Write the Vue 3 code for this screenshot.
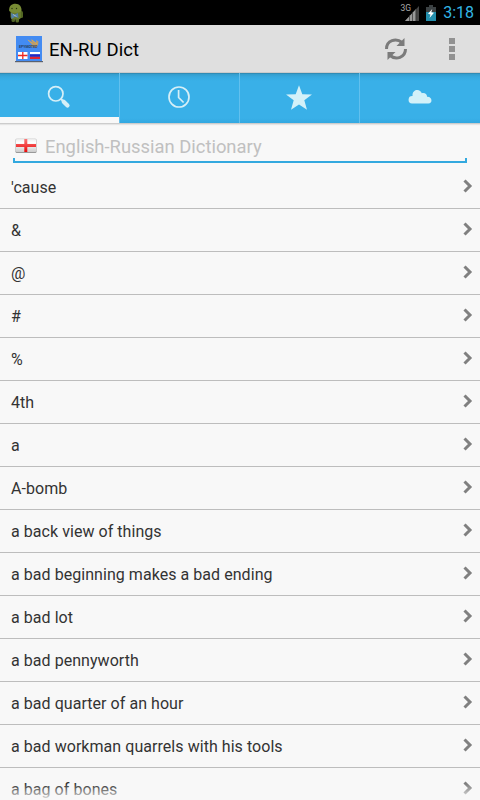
<script setup>
const words = ["'cause", '&', '@', '#', '%', '4th', 'a', 'A-bomb', 'a back view of things', 'a bad beginning makes a bad ending', 'a bad lot', 'a bad pennyworth', 'a bad quarter of an hour', 'a bad workman quarrels with his tools', 'a bag of bones']
</script>

<template>
  <div class="screen">
    <header class="status">
      <svg class="droid" width="16" height="20" viewBox="0 0 16 20">
        <rect x="11" y="8" width="4" height="7" rx="1.500" fill="#526622" />
        <rect x="3.500" y="13" width="3.500" height="6" rx="1.500" fill="#4f6125" />
        <rect x="7.500" y="13" width="3.500" height="6.500" rx="1.500" fill="#596c2a" />
        <rect x="2.500" y="7" width="10.500" height="9.500" rx="3" fill="#66792d" />
        <path d="M1.200 8C.8 3 3.500.8 7.500.8S14 4 13.500 8c-2 2.500-10 2.500-12.300 0z" fill="#788c35" />
        <circle cx="4" cy="5.500" r=".7" fill="#293412" /><circle cx="8.500" cy="5.500" r=".7" fill="#293412" />
        <path d="M3 10l3.500 1.500L10 10l.5 5-3.500-1.200L3.500 16z" fill="#5280a8" />
        <path d="M5 11.500l3.500 2" stroke="#a6bdc4" />
      </svg>
      <div class="status-right">
        <span class="net">3G</span>
        <svg class="signal" width="14" height="16" viewBox="0 0 14 16">
          <path d="M0 16L14 1v15z" fill="#444" />
          <path d="M0 16L11 4v12z" fill="#999" />
          <path d="M4.500 10v6M7.500 7v9M10.800 4v12" stroke="#333" stroke-width=".7" />
        </svg>
        <svg class="battery" width="10" height="16" viewBox="0 0 10 16">
          <path d="M3 0h4v2h3v14H0V2h3z" fill="#3c4244" />
          <path d="M0 7h10v9H0z" fill="#238eac" />
          <path d="M6.300 4L2 8.700l2.500.7L3.500 13 8 7.800l-2.700-.6z" fill="#fff" />
        </svg>
        <span class="clock">3:18</span>
      </div>
    </header>
    <div class="bar">
      <svg class="logo" width="28" height="28" viewBox="0 0 28 28">
        <path d="M1 1h26v25H1z" fill="#438bf2" />
        <path d="M0 26h28v1.200H0z" fill="#59616f" />
        <path d="M12 4l5 4-1-4 5 4 .3-3 2.200 1.500-.5 3.500-2 3-3-2.500 1 2.500-5-3 3.500.2z" fill="#bb9c6b" />
        <path d="M13 5l4 3M17 5l5 4" stroke="#e3ad49" stroke-width=".8" />
        <text x="4" y="12.500" class="logo-text">EPYMOTED</text>
        <rect x="3" y="17" width="9.500" height="7" fill="#fff" />
        <path d="M7.800 17v7M3 20.500h9.500" stroke="#ed2822" stroke-width="1.300" />
        <path d="M15 17h10v2.300H15z" fill="#fff" />
        <path d="M15 19.300h10v2.500H15z" fill="#2329c5" />
        <path d="M15 21.800h10V24H15z" fill="#dc2534" />
      </svg>
      <h1>EN-RU Dict</h1>
      <svg class="refresh" width="24" height="24" viewBox="0 0 24 24">
        <path d="M2.500 12C2.500 3.500 12 .5 18 5.500M21.500 12C21.500 20.500 12 23.500 6 18.500" fill="none" stroke="#7b7b7b" stroke-width="3" />
        <path d="M20.500 1v8h-8zM3.500 23v-8h8z" fill="#7b7b7b" />
      </svg>
      <div class="more"><i /><i /><i /></div>
    </div>
    <nav class="tabs">
      <div class="tab active">
        <svg width="24" height="24" viewBox="0 0 24 24"><circle cx="8.800" cy="8.800" r="7.200" fill="none" stroke="#d6eff7" stroke-width="1.700" /><path d="M13.800 13.800l2.700 2.700" stroke="#d6eff7" stroke-width="2" /><path d="M16.700 16.700l3.800 3.800" stroke="#d6eff7" stroke-width="4.200" stroke-linecap="round" /></svg>
      </div>
      <div class="tab">
        <svg width="24" height="24" viewBox="0 0 24 24"><circle cx="12" cy="12" r="10" fill="none" stroke="#d6eff7" stroke-width="1.700" /><path d="M11.600 5v7.500l5 5" fill="none" stroke="#d6eff7" stroke-width="1.700" /></svg>
      </div>
      <div class="tab">
        <svg class="star" width="26" height="26" viewBox="0 0 26 26"><path d="M13 .2l3.300 9 9.700.2-7.700 5.800 2.700 9.600-8-5.300-8 5.300 2.700-9.600L0 9.400l9.700-.2z" fill="#d3f1f9" /></svg>
      </div>
      <div class="tab">
        <svg width="24" height="24" viewBox="0 0 24 24"><path d="M4 18.500a3.700 3.700 0 0 1 .6-7.400C4 7.500 6.500 5 9.300 5c2.200 0 3.800 1.300 4.500 3.200 3-.8 5.400 1 5.200 3.600 5.500-.4 5.800 6.700 1.500 6.700z" fill="#d3f1f9" /></svg>
      </div>
    </nav>
    <section class="search">
      <div class="field">
        <svg class="flag" width="22" height="16" viewBox="0 0 22 16">
          <defs>
            <linearGradient id="cloth" x2="0" y2="1"><stop offset="0" stop-color="#eee" /><stop offset=".3" stop-color="#fff" /><stop offset="1" stop-color="#ccc" /></linearGradient>
            <linearGradient id="cross" x2="0" y2="1"><stop offset="0" stop-color="#fa7777" /><stop offset="1" stop-color="#e90909" /></linearGradient>
          </defs>
          <rect x=".5" y="1" width="21" height="14" rx="1.500" fill="#888" />
          <rect x=".5" y=".7" width="21" height="13.300" rx="1.500" fill="url(#cloth)" stroke="#ccc" stroke-width=".5" />
          <path d="M9.300 1h3v13h-3zM1 6h20v3H1z" fill="url(#cross)" />
        </svg>
        <span>English-Russian Dictionary</span>
      </div>
    </section>
    <ul class="list">
      <li v-for="word in words" :key="word">
        <span>{{ word }}</span>
        <svg width="10" height="14" viewBox="0 0 10 14"><path d="M1.500 1.500L7 7l-5.500 5.500" fill="none" stroke="#808080" stroke-width="3" /></svg>
      </li>
    </ul>
    <div class="fade" />
  </div>
</template>

<style>
body { margin: 0; overflow: hidden; }
</style>

<style scoped>
.screen { position: relative; width: 480px; height: 800px; overflow: hidden; display: flex; flex-direction: column; background: #f8f8f8; font-family: Roboto, "Liberation Sans", sans-serif; color: #333; }
svg { display: block; flex: none; }
.status { box-sizing: border-box; height: 25px; flex: none; background: #000; display: flex; align-items: center; justify-content: space-between; padding: 0 6px 0 8px; }
.status-right { display: flex; align-items: center; }
.net { font-size: 8.5px; line-height: 10px; color: #aaa; align-self: flex-start; margin: 3px -6px 0 0; }
.battery { margin: 0 7px; }
.clock { font-size: 16px; line-height: 25px; color: #33b5e5; }
.bar { box-sizing: border-box; height: 48px; flex: none; background: #dfdfdf; border-bottom: 1px solid #cbcbcb; display: flex; align-items: center; padding: 0 25px 0 15px; }
.logo { margin-top: 1px; }
.logo-text { font: bold 3.5px Roboto, sans-serif; fill: #273e60; }
h1 { margin: 0 auto 0 6px; padding-top: 2px; font-size: 18.5px; font-weight: 400; line-height: 24px; letter-spacing: .1px; color: #000; }
.more { display: flex; flex-direction: column; gap: 2px; margin-left: 41px; }
.more i { width: 6px; height: 6px; background: #929292; }
.tabs { box-sizing: border-box; height: 51px; flex: none; display: grid; grid-template-columns: repeat(4, 1fr); background: linear-gradient(#2c7ba0 0, #349dcc 1px, #37a9df 4px, #39b0e8 8px, #39b0e8 45px, #32a8e1 50px); border-bottom: 1px solid #ccc; box-shadow: 0 1px 1px #e5e5e5; }
.tab { box-sizing: border-box; display: flex; justify-content: center; padding: 12px 1px 0 0; border-right: 1px solid #62c0ee; }
.tab:last-child { border: 0; padding-right: 0; }
.active { background: linear-gradient(#f8f8f8, #f8f8f8) left bottom / 100% 6px no-repeat; }
.search { box-sizing: border-box; height: 42px; flex: none; padding: 10px 13px 3px; }
.field { box-sizing: border-box; height: 29px; display: flex; align-items: center; padding: 0 2px 4px; border-bottom: 2px solid #33a9df; background: linear-gradient(#33a9df, #33a9df) left bottom / 2px 3px no-repeat, linear-gradient(#33a9df, #33a9df) right bottom / 2px 3px no-repeat; }
.field span { margin-left: 8px; padding-top: 2px; font-size: 18.4px; line-height: 22px; color: #c0c0c0; }
.list { list-style: none; margin: 0; padding: 0; }
li { box-sizing: border-box; height: 43px; border-bottom: 1px solid #bdbdbd; display: flex; align-items: center; justify-content: space-between; padding: 0 7px 0 11px; font-size: 16px; line-height: 20px; letter-spacing: .05px; }
li span { padding-top: 1px; }
li svg { margin-bottom: 2px; }
.fade { position: absolute; left: 0; right: 0; bottom: 0; height: 16px; background: linear-gradient(rgba(248,248,248,0), rgba(248,248,248,.9)); }
</style>
